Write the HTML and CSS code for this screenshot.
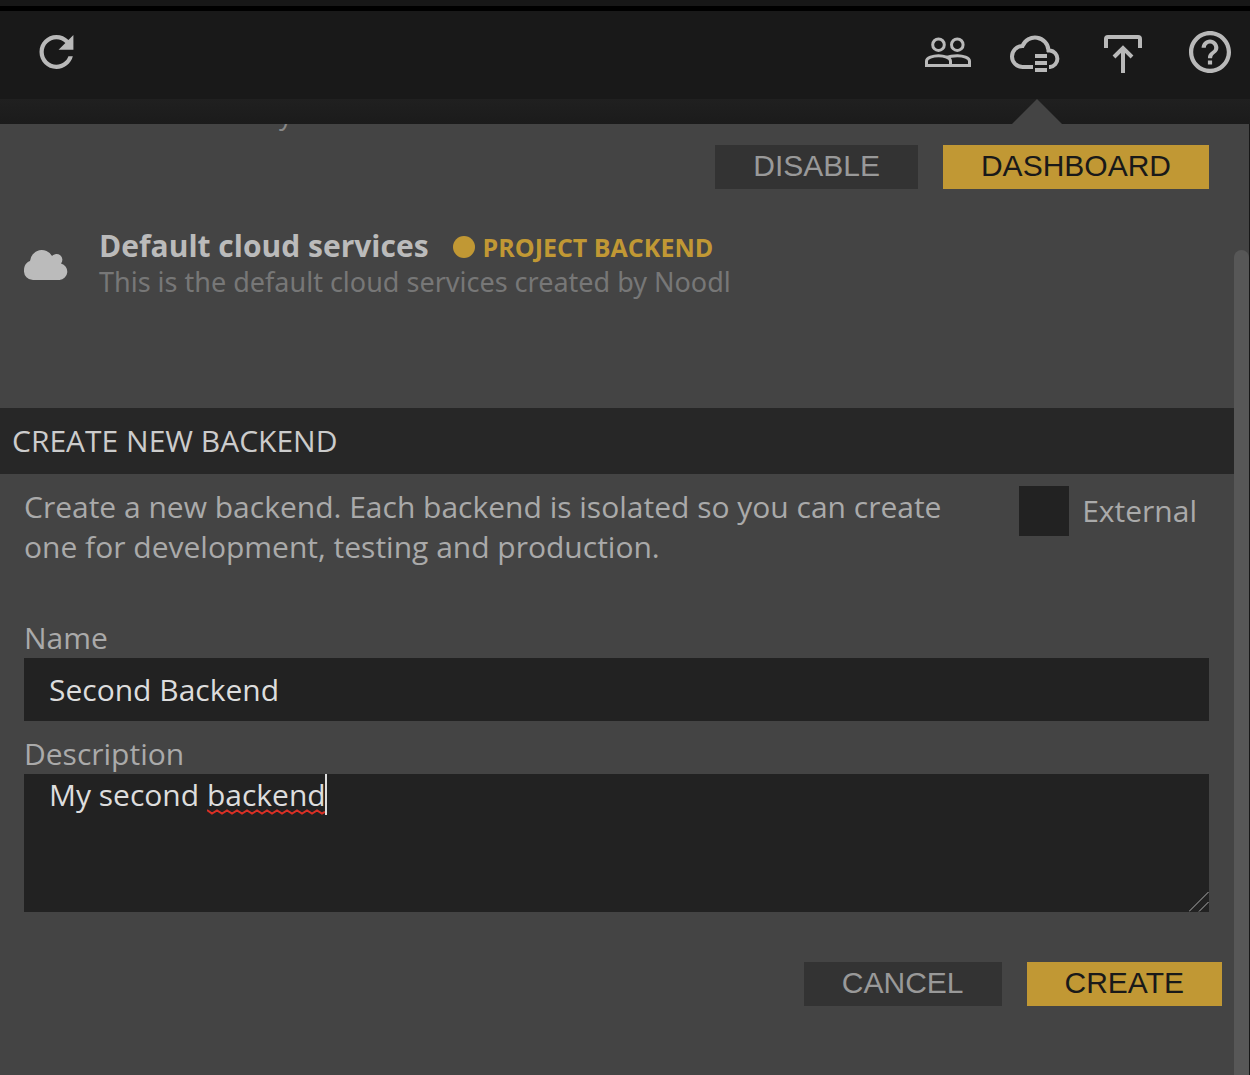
FILE: index.html
```html
<!DOCTYPE html>
<html lang="en">
<head>
<meta charset="utf-8">
<meta name="viewport" content="width=device-width, initial-scale=1">
<title>Cloud services</title>
<link rel="stylesheet" href="styles.css">
</head>
<body>
<header class="toolbar">
  <button class="tool" type="button" aria-label="Refresh">
    <svg viewBox="0 0 50 44"><path transform="translate(0 -3.5) scale(2.12)" d="M17.65 6.35C16.2 4.9 14.21 4 12 4c-4.42 0-7.99 3.58-7.99 8s3.57 8 7.99 8c3.73 0 6.84-2.55 7.73-6h-2.08c-.82 2.33-3.04 4-5.65 4-3.31 0-6-2.69-6-6s2.69-6 6-6c1.66 0 3.14.69 4.22 1.78L13 11h7V4l-2.35 2.35z"/></svg>
  </button>
  <nav class="tools" aria-label="Project">
    <button class="tool" type="button" aria-label="Collaborators">
      <svg class="line thin" viewBox="0 0 50 44"><circle cx="17.5" cy="14.7" r="5.8"/><circle cx="36.3" cy="14.7" r="5.8"/><path d="M5.5 35.5V31C5.5 28 12 25.7 17.5 25.7S29.5 28 29.5 31V35.5Z"/><path d="M25.5 27.5C28.5 26.2 32.5 25.7 36.5 25.7C42 25.7 48.5 28 48.5 31V35.5H29.5"/></svg>
    </button>
    <button class="tool" type="button" aria-label="Cloud services" aria-expanded="true">
      <svg class="line" viewBox="0 0 50 44"><path d="M24 37H13.500A10.500 10.500 0 0 1 13.500 16A13.500 13.500 0 0 1 39.500 20V22M38 20.500H41A8.300 8.300 0 0 1 41 37H40"/><path d="M26 26H38M26 33H38M26 40H38"/></svg>
    </button>
    <button class="tool" type="button" aria-label="Deploy">
      <svg class="line" viewBox="0 0 50 44"><path d="M9 18V9a2 2 0 0 1 2-2H41a2 2 0 0 1 2 2V18M26 43V18M17 27L26 18L35 27"/></svg>
    </button>
    <button class="tool" type="button" aria-label="Help">
      <svg viewBox="0 0 50 44"><path transform="translate(-.2 -3.2) scale(2.1)" d="M11 18h2v-2h-2v2zm1-16C6.480 2 2 6.480 2 12s4.480 10 10 10 10-4.480 10-10S17.520 2 12 2zm0 18c-4.410 0-8-3.590-8-8s3.590-8 8-8 8 3.590 8 8-3.590 8-8 8zm0-14c-2.210 0-4 1.790-4 4h2c0-1.100.900-2 2-2s2 .900 2 2c0 2-3 1.750-3 5h2c0-2.250 3-2.500 3-5 0-2.210-1.790-4-4-4z"/></svg>
    </button>
  </nav>
</header>
<div class="strip"></div>
<main class="panel">
  <div class="content">
    <div class="previous">y</div>
    <div class="actions">
      <button class="btn" type="button">DISABLE</button>
      <button class="btn primary" type="button">DASHBOARD</button>
    </div>
    <section class="service">
      <svg class="cloud" viewBox="0 0 44 32" aria-hidden="true"><path d="M9 32A9 9 0 0 1 0 22.500C0 17.500 2.500 14 6 13A11.800 11.800 0 0 1 28 8A5.500 5.500 0 0 1 37 15.500A8.400 8.400 0 0 1 35.500 32Z"/></svg>
      <div>
        <div class="heading">
          <h2>Default cloud services</h2>
          <span class="badge">PROJECT BACKEND</span>
        </div>
        <p>This is the default cloud services created by Noodl</p>
      </div>
    </section>
    <h1 class="section-title">CREATE NEW BACKEND</h1>
    <form class="form">
      <div class="intro">
        <p>Create a new backend. Each backend is isolated so you can create one for development, testing and production.</p>
        <label class="external"><input type="checkbox">External</label>
      </div>
      <label class="field-label" for="name">Name</label>
      <input class="field" id="name" type="text" value="Second Backend">
      <label class="field-label" for="description">Description</label>
      <div class="area">
        <textarea class="field" id="description" spellcheck="false">My second backend</textarea>
        <svg class="spelling" viewBox="0 0 118 6" aria-hidden="true"><path d="M0 1L5 4.500L10 1.500L15 4.500L20 1.500L25 4.500L30 1.500L35 4.500L40 1.500L45 4.500L50 1.500L55 4.500L60 1.500L65 4.500L70 1.500L75 4.500L80 1.500L85 4.500L90 1.500L95 4.500L100 1.500L105 4.500L110 1.500L115 4.500L118 3"/></svg>
        <span class="caret"></span>
        <svg class="grip" viewBox="0 0 20 20" aria-hidden="true"><path d="M0 19.500L19.500 0M10 19.500L19.500 10"/></svg>
      </div>
      <div class="form-actions">
        <button class="btn" type="button">CANCEL</button>
        <button class="btn primary" type="submit">CREATE</button>
      </div>
    </form>
  </div>
  <div class="track"><div class="thumb"></div></div>
</main>
</body>
</html>
```
FILE: styles.css
```css
* { box-sizing: border-box; }

body {
  display: flex;
  flex-direction: column;
  min-height: 100vh;
  margin: 0;
  background: #171717;
  color: #aaa;
  font: 30px/40px "Open Sans", "Noto Sans", sans-serif;
}

h1, h2, p { margin: 0; font-size: inherit; }

.toolbar {
  display: flex;
  align-items: center;
  justify-content: space-between;
  height: 93px;
  margin-top: 6px;
  padding: 0 15px 6px 31px;
  border-top: 5px solid #000;
  background: #191919;
}

.tools { display: flex; gap: 38px; }

.tool {
  width: 50px;
  height: 44px;
  padding: 0;
  border: 0;
  background: none;
}

.tool svg {
  display: block;
  overflow: visible;
  fill: #b9b9b9;
}

.tool .line {
  fill: none;
  stroke: #b9b9b9;
  stroke-width: 4;
}

.tool .thin { stroke-width: 3; }

.strip {
  position: relative;
  height: 25px;
  background: linear-gradient(#202020, #1b1b1b);
}

.strip::after {
  content: "";
  position: absolute;
  right: 188px;
  bottom: 0;
  width: 50px;
  height: 25px;
  background: #444;
  clip-path: polygon(50% 0, 100% 100%, 0 100%);
}

.panel {
  display: flex;
  flex: 1;
  margin-right: 1px;
  background: #444;
}

.content { flex: 1; min-width: 0; }

.previous {
  display: flex;
  align-items: flex-end;
  height: 10px;
  padding-left: 279px;
  overflow: hidden;
  color: #888;
  font-size: 27px;
}

.actions, .form-actions {
  display: flex;
  justify-content: flex-end;
  gap: 25px;
}

.actions { padding: 11px 25px 0; }

.btn {
  height: 44px;
  padding: 0 38px 2px;
  border: 0;
  background: #333;
  color: #999;
  font: 30px/42px "Liberation Sans", Arial, sans-serif;
}

.primary { background: #c19834; color: #191919; }

.service {
  display: flex;
  align-items: center;
  gap: 31px;
  height: 219px;
  padding: 36px 24px 106px;
  color: #777;
}

.service p, .heading { line-height: 36px; }

.service p { font-family: "Noto Sans", sans-serif; font-size: 27px; }

.cloud { width: 44px; height: 32px; fill: #bbb; }

.heading {
  display: flex;
  align-items: center;
  gap: 24px;
  height: 36px;
  color: #bbb;
}

.badge {
  display: flex;
  align-items: center;
  gap: 8px;
  padding-top: 2px;
  color: #c19834;
  font-size: 25px;
  font-weight: 700;
}

.badge::before {
  content: "";
  width: 22px;
  height: 22px;
  border-radius: 50%;
  background: #c19834;
}

.section-title {
  padding: 0 12px;
  background: #272727;
  color: #ccc;
  font-weight: 400;
  line-height: 66px;
}

.form { padding: 12px 25px 24px 24px; }

.intro {
  display: flex;
  align-items: flex-start;
  justify-content: space-between;
  gap: 50px;
  height: 132px;
}

.intro p { padding-top: 1px; }

.external {
  display: flex;
  align-items: center;
  gap: 13px;
  padding-right: 12px;
}

.external input {
  appearance: none;
  width: 50px;
  height: 50px;
  margin: 0;
  background: #222;
}

.field-label { display: block; }

.field {
  display: block;
  width: 100%;
  height: 63px;
  margin: 0 0 13px;
  padding: 0 25px;
  border: 0;
  border-radius: 0;
  outline: 0;
  background: #222;
  color: #ddd;
  font: inherit;
}

.area { position: relative; margin-bottom: 50px; }

textarea.field {
  height: 138px;
  margin: 0;
  line-height: 42px;
  resize: none;
}

.spelling {
  position: absolute;
  top: 35px;
  left: 183px;
  width: 118px;
  height: 6px;
  fill: none;
  stroke: #d93025;
  stroke-width: 2;
}

.caret {
  position: absolute;
  top: 0;
  left: 301px;
  width: 2px;
  height: 41px;
  background: #ddd;
}

.grip {
  position: absolute;
  right: 0;
  bottom: 0;
  width: 20px;
  height: 20px;
  stroke: #aaa;
}

.form-actions { margin-right: -13px; }

.track { width: 15px; padding-top: 126px; display: flex; }

.thumb {
  width: 15px;
  border-radius: 8px 8px 0 0;
  background: #575757;
}
```
